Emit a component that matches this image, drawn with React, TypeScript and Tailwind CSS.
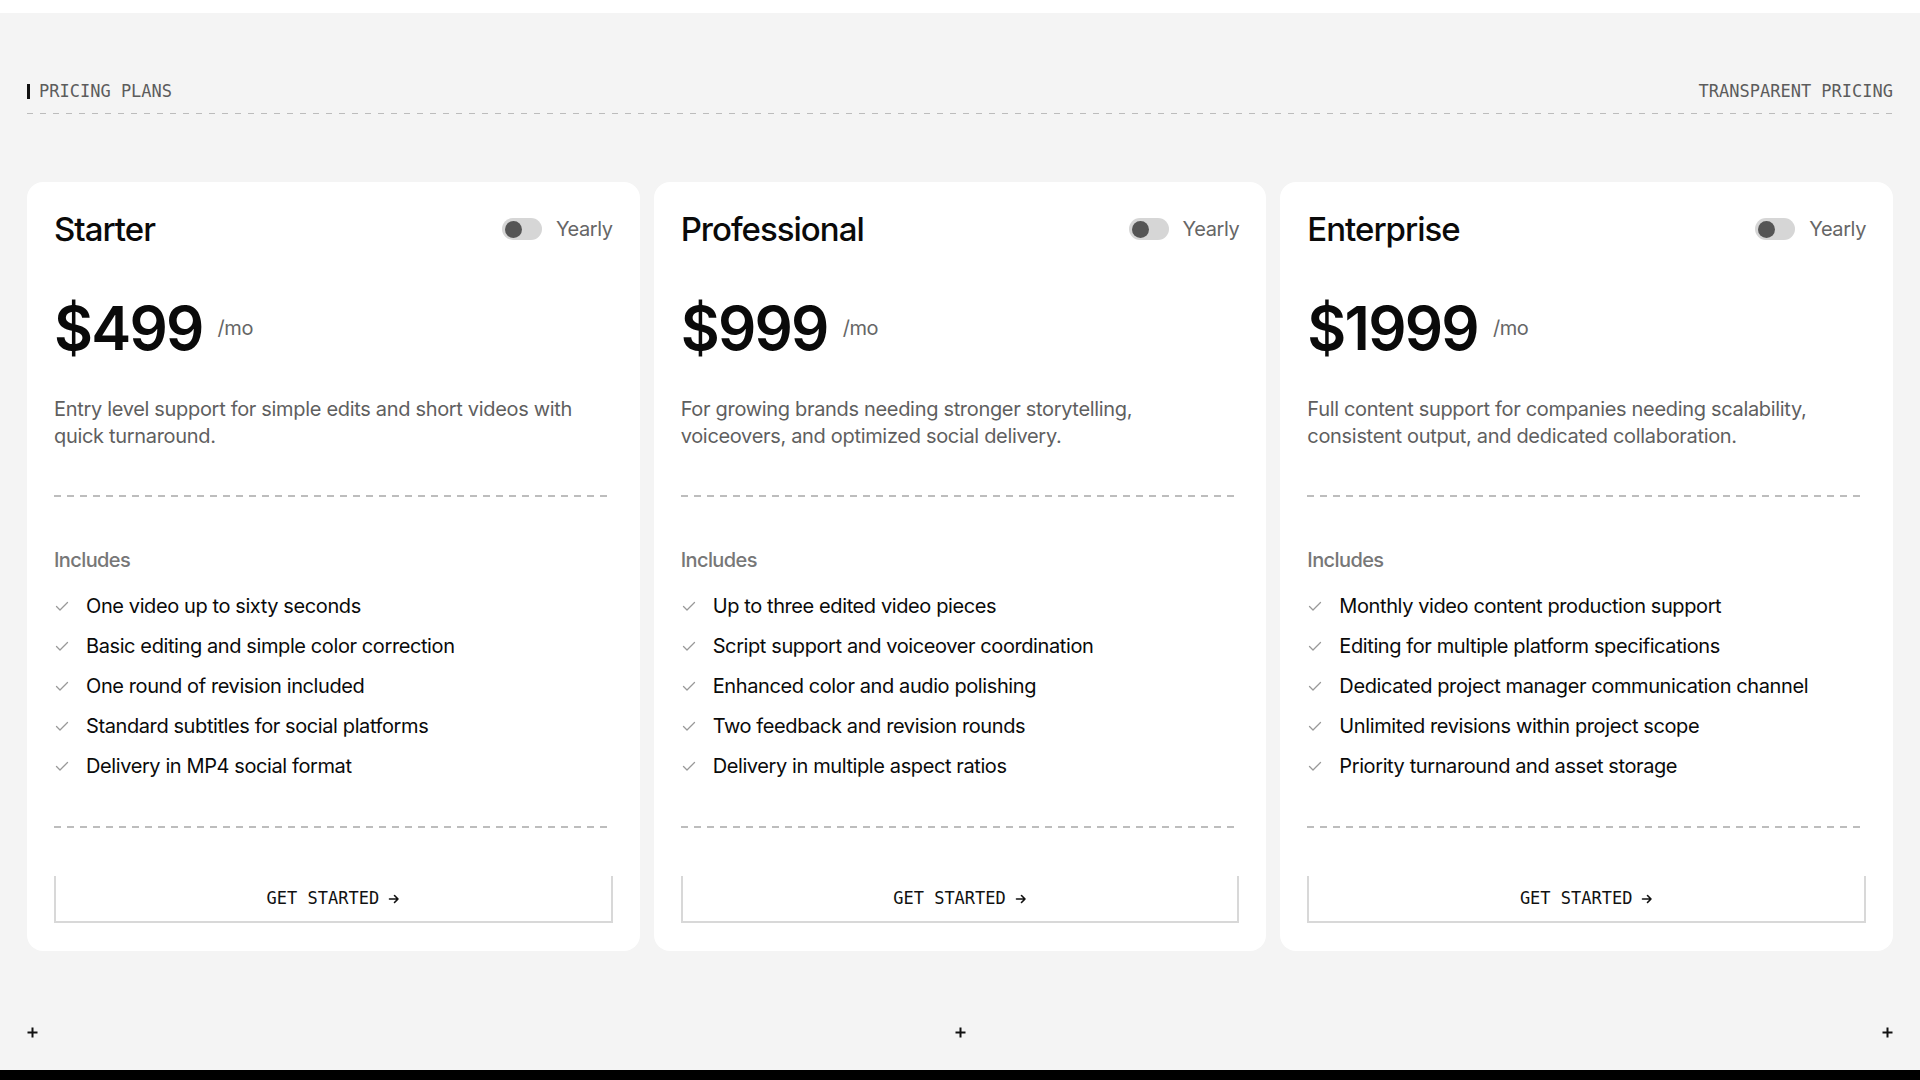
import React from "react";

type Plan = {
  name: string;
  price: string;
  desc: string[];
  features: string[];
};

const plans: Plan[] = [
  {
    name: "Starter",
    price: "$499",
    desc: ["Entry level support for simple edits and short videos with", "quick turnaround."],
    features: [
      "One video up to sixty seconds",
      "Basic editing and simple color correction",
      "One round of revision included",
      "Standard subtitles for social platforms",
      "Delivery in MP4 social format",
    ],
  },
  {
    name: "Professional",
    price: "$999",
    desc: ["For growing brands needing stronger storytelling,", "voiceovers, and optimized social delivery."],
    features: [
      "Up to three edited video pieces",
      "Script support and voiceover coordination",
      "Enhanced color and audio polishing",
      "Two feedback and revision rounds",
      "Delivery in multiple aspect ratios",
    ],
  },
  {
    name: "Enterprise",
    price: "$1999",
    desc: ["Full content support for companies needing scalability,", "consistent output, and dedicated collaboration."],
    features: [
      "Monthly video content production support",
      "Editing for multiple platform specifications",
      "Dedicated project manager communication channel",
      "Unlimited revisions within project scope",
      "Priority turnaround and asset storage",
    ],
  },
];

function CheckIcon() {
  return (
    <svg width="16" height="16" viewBox="0 0 16 16" fill="none" className="shrink-0">
      <path d="M2.5 8.5 L6 12 L13.5 4.5" stroke="#999999" strokeWidth="1.3" strokeLinecap="round" strokeLinejoin="round" />
    </svg>
  );
}

function Plus() {
  return (
    <svg width="11" height="11" viewBox="0 0 11 11" fill="none">
      <path d="M5.5 0.5 V10.5 M0.5 5.5 H10.5" stroke="#111" strokeWidth="2" />
    </svg>
  );
}

function Arrow() {
  return (
    <svg width="12" height="12" viewBox="0 0 12 12" fill="none" className="ml-[9px]">
      <path d="M1.5 6 H10 M6.5 2.5 L10 6 L6.5 9.5" stroke="#111" strokeWidth="1.6" strokeLinecap="round" strokeLinejoin="round" />
    </svg>
  );
}

function Dashed() {
  return <div className="h-[2px] w-full bg-[repeating-linear-gradient(to_right,#bdbdbd_0_7px,transparent_7px_13px)]" />;
}

function Card({ plan }: { plan: Plan }) {
  return (
    <div className="flex-1 rounded-2xl bg-white px-[27px] pt-[27px] pb-[28px] flex flex-col">
      <div className="flex items-center justify-between h-[40px]">
        <div className="text-[33px] leading-[40px] font-medium tracking-[-0.03em] text-[#0a0a0a]">{plan.name}</div>
        <div className="flex items-center gap-[14px]">
          <div className="w-[40px] h-[22px] rounded-full bg-[#d6d6d6] flex items-center px-[3px]">
            <div className="w-[17px] h-[17px] rounded-full bg-[#555555]" />
          </div>
          <span className="text-[20px] leading-[28px] text-[#666666] tracking-[-0.02em]">Yearly</span>
        </div>
      </div>
      <div className="mt-[49px] flex items-center gap-[15px]">
        <span className="text-[60px] leading-[60px] font-semibold tracking-[-0.03em] text-[#0a0a0a]">{plan.price}</span>
        <span className="text-[20px] leading-[28px] text-[#666666] tracking-[-0.02em]">/mo</span>
      </div>
      <div className="mt-[38px] text-[20px] leading-[27px] text-[#5f5f5f] tracking-[-0.016em]">
        {plan.desc.map((d, i) => (
          <div key={i}>{d}</div>
        ))}
      </div>
      <div className="mt-[45px]">
        <Dashed />
      </div>
      <div className="mt-[49px] text-[20px] leading-[28px] font-medium text-[#777777] tracking-[-0.03em]">Includes</div>
      <ul className="mt-[18px] flex flex-col gap-[12px]">
        {plan.features.map((f) => (
          <li key={f} className="flex items-center gap-[16px]">
            <CheckIcon />
            <span className="text-[20px] leading-[28px] text-[#0a0a0a] tracking-[-0.02em]">{f}</span>
          </li>
        ))}
      </ul>
      <div className="mt-[46px]">
        <Dashed />
      </div>
      <button className="mt-[48px] h-[47px] w-full border-x-2 border-b-2 border-t-0 border-[#d8d8d8] bg-white flex items-center justify-center font-['DejaVu_Sans_Mono',monospace] text-[17px] font-normal text-[#111111]">
        <span>GET STARTED</span>
        <Arrow />
      </button>
    </div>
  );
}

export default function App() {
  return (
    <div className="w-full min-h-screen bg-white pt-[13px] font-['Inter',sans-serif]">
      <div className="h-[1057px] bg-[#f4f4f4] flex flex-col">
        <div className="px-[27px] pt-[66px]">
          <div className="flex items-center justify-between h-[24px] font-['DejaVu_Sans_Mono',monospace] text-[17px] leading-[24px] text-[#5c5c5c]">
            <div className="flex items-center gap-[9px]">
              <div className="w-[3px] h-[15px] bg-[#111111]" />
              <span>PRICING PLANS</span>
            </div>
            <span>TRANSPARENT PRICING</span>
          </div>
          <div className="mt-[10px] h-px w-full bg-[repeating-linear-gradient(to_right,#bcbcbc_0_6px,transparent_6px_13px)]" />
        </div>
        <div className="px-[27px] mt-[68px] flex gap-[14px]">
          {plans.map((p) => (
            <Card key={p.name} plan={p} />
          ))}
        </div>
        <div className="px-[27px] mt-[76px] flex justify-between">
          <Plus />
          <Plus />
          <Plus />
        </div>
      </div>
      <div className="h-[10px] bg-black" />
    </div>
  );
}
